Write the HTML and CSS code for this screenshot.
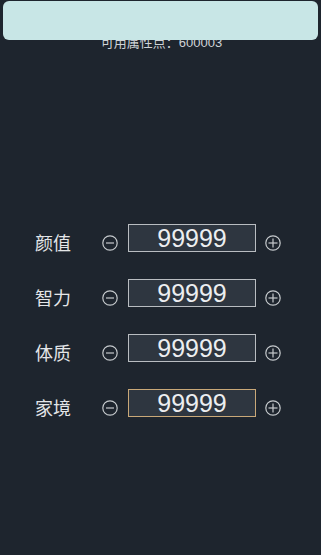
FILE: index.html
```html
<!DOCTYPE html>
<html lang="zh">
<head>
<meta charset="utf-8">
<link rel="stylesheet" href="styles.css">
</head>
<body>
<div class="topbar"></div>
<div class="points">可用属性点：600003</div>
<div class="attrs">
  <div class="row">
    <span class="label">颜值</span>
    <svg class="btn" viewBox="0 0 16 16"><circle cx="8" cy="8" r="7.2"/><line x1="4" y1="8" x2="12" y2="8"/></svg>
    <div class="box">99999</div>
    <svg class="btn" viewBox="0 0 16 16"><circle cx="8" cy="8" r="7.2"/><line x1="3.5" y1="8" x2="12.5" y2="8"/><line x1="8" y1="3.5" x2="8" y2="12.5"/></svg>
  </div>
  <div class="row">
    <span class="label">智力</span>
    <svg class="btn" viewBox="0 0 16 16"><circle cx="8" cy="8" r="7.2"/><line x1="4" y1="8" x2="12" y2="8"/></svg>
    <div class="box">99999</div>
    <svg class="btn" viewBox="0 0 16 16"><circle cx="8" cy="8" r="7.2"/><line x1="3.5" y1="8" x2="12.5" y2="8"/><line x1="8" y1="3.5" x2="8" y2="12.5"/></svg>
  </div>
  <div class="row">
    <span class="label">体质</span>
    <svg class="btn" viewBox="0 0 16 16"><circle cx="8" cy="8" r="7.2"/><line x1="4" y1="8" x2="12" y2="8"/></svg>
    <div class="box">99999</div>
    <svg class="btn" viewBox="0 0 16 16"><circle cx="8" cy="8" r="7.2"/><line x1="3.5" y1="8" x2="12.5" y2="8"/><line x1="8" y1="3.5" x2="8" y2="12.5"/></svg>
  </div>
  <div class="row">
    <span class="label">家境</span>
    <svg class="btn" viewBox="0 0 16 16"><circle cx="8" cy="8" r="7.2"/><line x1="4" y1="8" x2="12" y2="8"/></svg>
    <div class="box box-active">99999</div>
    <svg class="btn" viewBox="0 0 16 16"><circle cx="8" cy="8" r="7.2"/><line x1="3.5" y1="8" x2="12.5" y2="8"/><line x1="8" y1="3.5" x2="8" y2="12.5"/></svg>
  </div>
</div>
</body>
</html>
```
FILE: styles.css
```css
html, body {
  margin: 0;
  padding: 0;
  background: #1e252e;
  height: 100%;
}
body {
  font-family: "Liberation Sans", "Noto Sans CJK SC", sans-serif;
  color: #e2e4e6;
  padding-top: 1px;
  box-sizing: border-box;
}
.topbar {
  position: relative;
  z-index: 1;
  margin: 0 3px;
  height: 39px;
  border-radius: 6px;
  background: #c8e6e6;
}
.points {
  margin-top: -5px;
  text-align: center;
  font-size: 13px;
  line-height: 16px;
  color: #cfd3d7;
  padding-left: 2px;
}
.attrs {
  margin-top: 173px;
  display: flex;
  flex-direction: column;
  gap: 27px;
}
.row {
  display: flex;
  align-items: center;
  height: 28px;
  padding-left: 35px;
}
.label {
  font-family: "Noto Sans CJK SC", sans-serif;
  font-size: 18px;
  line-height: 20px;
  width: 36px;
  margin-top: 8px;
  color: #e4e6e8;
}
.btn {
  width: 16px;
  height: 16px;
  margin-top: 10px;
  fill: none;
  stroke: #c6cacd;
  stroke-width: 1.2;
}
.row .btn:nth-of-type(1) {
  margin-left: 31px;
}
.row .btn:nth-of-type(2) {
  margin-left: 9px;
}
.box {
  margin-left: 10px;
  width: 128px;
  height: 28px;
  box-sizing: border-box;
  border: 1.5px solid #b9bdc1;
  background: #2e3640;
  color: #eceef0;
  font-size: 25px;
  line-height: 27px;
  text-align: center;
}
.box-active {
  border-color: #c9a878;
}
```
